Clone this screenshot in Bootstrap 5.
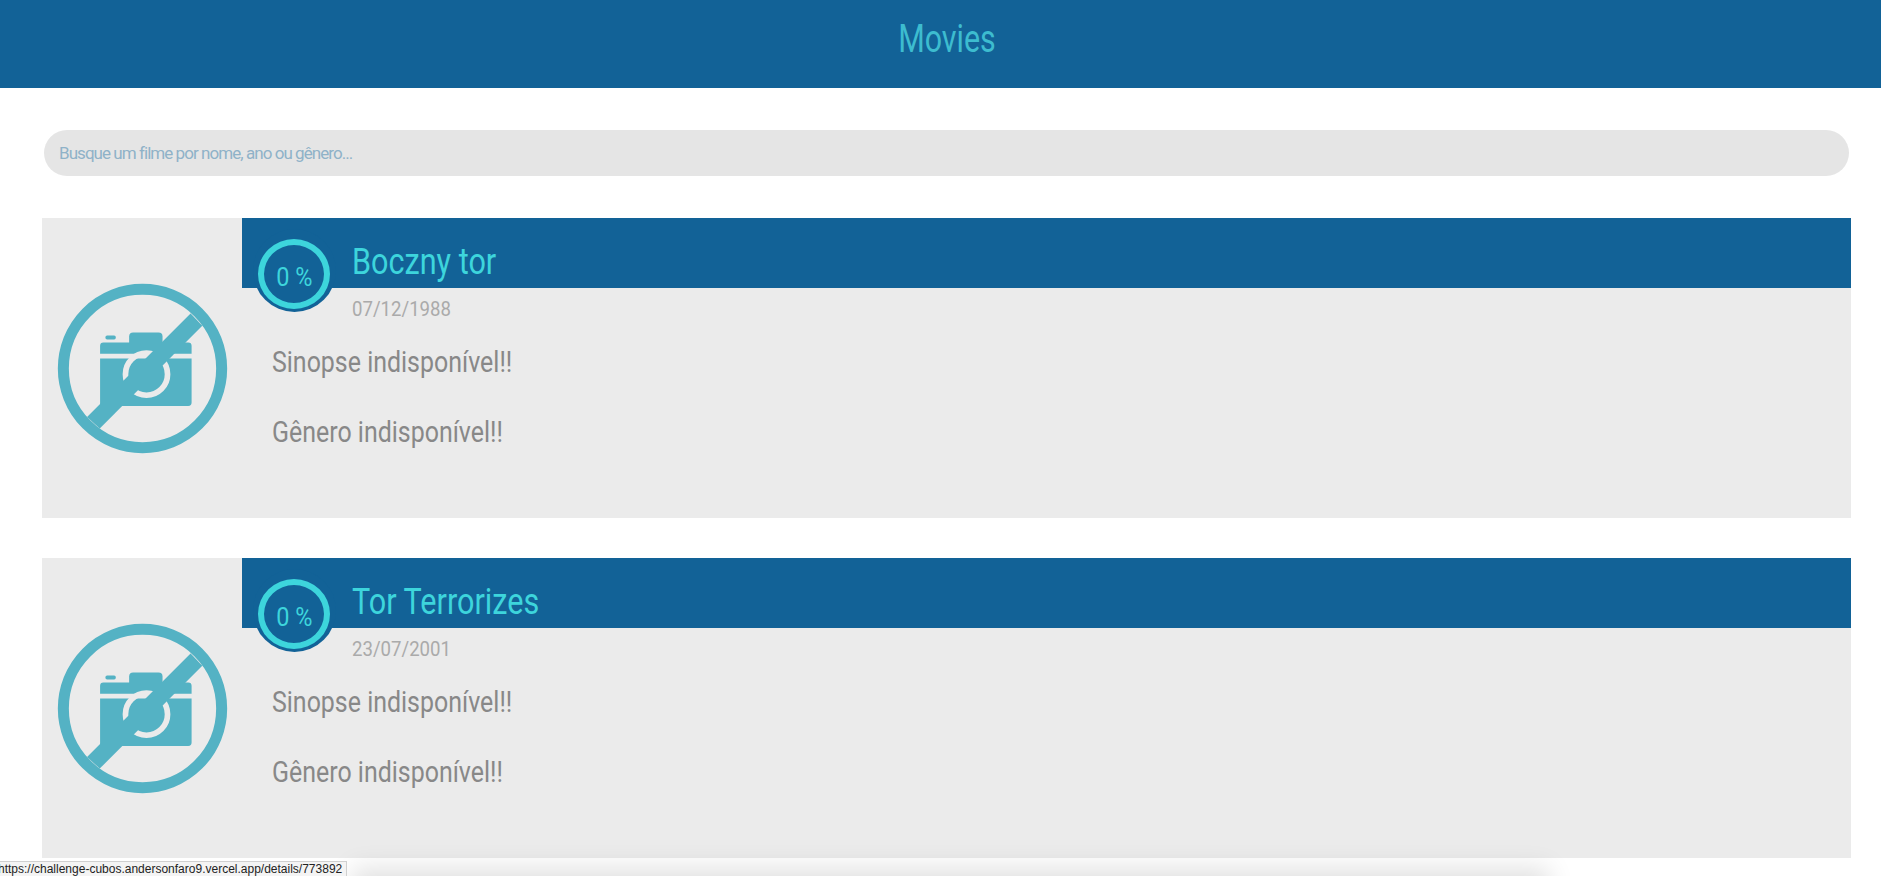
<!DOCTYPE html>
<html lang="pt-BR">
<head>
    <meta charset="UTF-8">
    <meta name="viewport" content="width=device-width, initial-scale=1.0">
    <title>Movies</title>
    <link rel="stylesheet" href="https://cdn.jsdelivr.net/npm/bootstrap@5.3.0/dist/css/bootstrap.min.css">
    <style>
        body {
            font-family: "Roboto", "Liberation Sans", sans-serif;
            background: #fff;
        }

        /* no condensed family installed, so Roboto gets squeezed */
        .narrow-text {
            display: inline-block;
            white-space: nowrap;
            transform: scaleX(0.86);
            transform-origin: left center;
        }

        .top-bar {
            height: 88px;
            padding-left: 12px;
            background: #126297;
            color: #3dbccf;
            font-size: 38px;
            line-height: 78px;
        }

        .top-bar .narrow-text {
            transform: scaleX(0.8);
            transform-origin: center;
        }

        .page-body {
            padding: 42px 30px 18px 42px;
        }

        .search-wrap {
            padding: 0 2px 42px;
        }

        .search-box.form-control {
            height: 46px;
            padding: 0 15px;
            background: #e5e5e5;
            border: 0;
            font-size: 17px;
            letter-spacing: -0.95px;
            box-shadow: none;
        }

        .search-box::placeholder {
            color: #8fb2c8;
        }

        .movie-item {
            height: 300px;
            background: #ebebeb;
            margin-bottom: 40px;
        }

        .movie-item:last-child {
            margin-bottom: 0;
        }

        .poster-col {
            width: 200px;
        }

        .poster-icon {
            width: 171px;
            height: 171px;
        }

        .title-bar {
            height: 70px;
            background: #126297;
            padding-left: 110px;
            color: #3dd5dc;
            font-size: 36px;
            line-height: 88px;
        }

        .title-bar .narrow-text {
            transform: scaleX(0.85);
        }

        .score-ball {
            position: absolute;
            left: 10.5px;
            top: 10.5px;
            width: 83px;
            height: 83px;
            padding: 10.5px 5.5px 0;
            background: #126297;
            border-radius: 50%;
        }

        .score-ring {
            height: 70px;
            border: 6px solid #3dd5dc;
            border-radius: 50%;
            color: #3dd5dc;
            font-size: 25px;
            line-height: 66px;
        }

        .score-ring .narrow-text {
            transform: scaleX(0.94);
            transform-origin: center;
        }

        .movie-date {
            padding-left: 110px;
            margin-top: 9px;
            color: #aaa;
            font-size: 20px;
            line-height: 24px;
        }

        .movie-date .narrow-text {
            transform: scaleX(0.93);
        }

        .movie-info {
            margin: 0 0 34px 30px;
            color: #888;
            font-size: 29px;
            line-height: 36px;
        }

        .movie-date + .movie-info {
            margin-top: 23px;
        }

        .status-link {
            position: fixed;
            left: -3px;
            bottom: 0;
            height: 15px;
            padding: 0 4px 0 0;
            background: #f4f4f4;
            border: 1px solid #d0d0d0;
            border-bottom: 0;
            color: #222;
            font-family: "Liberation Sans", sans-serif;
            font-size: 12px;
            line-height: 15px;
            white-space: nowrap;
            z-index: 3;
        }

        .bottom-shade {
            position: fixed;
            left: 360px;
            right: 340px;
            bottom: -30px;
            height: 30px;
            box-shadow: 0 0 26px 8px rgba(0, 0, 0, 0.12);
            z-index: 2;
        }
    </style>
</head>
<body>

    <header class="top-bar text-center"><span class="narrow-text">Movies</span></header>

    <main class="page-body">
        <div class="search-wrap">
            <input type="text" class="form-control rounded-pill search-box" placeholder="Busque um filme por nome, ano ou gênero...">
        </div>

        <div class="movie-item d-flex">
            <div class="poster-col d-flex align-items-center justify-content-center flex-shrink-0">
                <svg class="poster-icon" viewBox="20 22 512 512">
                    <circle cx="276" cy="278" r="237" fill="none" stroke="#54b2c4" stroke-width="33"/>
                    <rect x="165" y="179" width="31" height="12" rx="5" fill="#54b2c4"/>
                    <path d="M236 205v-23q0-12 12-12h76q12 0 12 12v23z" fill="#54b2c4"/>
                    <path d="M149 234v-24q0-10 10-10h254q10 0 10 10v24zM149 248h274v132q0 10-10 10H149z" fill="#54b2c4"/>
                    <circle cx="288" cy="295" r="63" fill="none" stroke="#ebebeb" stroke-width="17"/>
                    <path d="M420 113l35 37-307 308-38-35z" fill="#54b2c4"/>
                </svg>
            </div>
            <div class="flex-grow-1 position-relative">
                <div class="title-bar"><span class="narrow-text">Boczny tor</span></div>
                <div class="score-ball"><div class="score-ring text-center"><span class="narrow-text">0 %</span></div></div>
                <div class="movie-date"><span class="narrow-text">07/12/1988</span></div>
                <p class="movie-info"><span class="narrow-text">Sinopse indisponível!!</span></p>
                <p class="movie-info"><span class="narrow-text">Gênero indisponível!!</span></p>
            </div>
        </div>

        <div class="movie-item d-flex">
            <div class="poster-col d-flex align-items-center justify-content-center flex-shrink-0">
                <svg class="poster-icon" viewBox="20 22 512 512">
                    <circle cx="276" cy="278" r="237" fill="none" stroke="#54b2c4" stroke-width="33"/>
                    <rect x="165" y="179" width="31" height="12" rx="5" fill="#54b2c4"/>
                    <path d="M236 205v-23q0-12 12-12h76q12 0 12 12v23z" fill="#54b2c4"/>
                    <path d="M149 234v-24q0-10 10-10h254q10 0 10 10v24zM149 248h274v132q0 10-10 10H149z" fill="#54b2c4"/>
                    <circle cx="288" cy="295" r="63" fill="none" stroke="#ebebeb" stroke-width="17"/>
                    <path d="M420 113l35 37-307 308-38-35z" fill="#54b2c4"/>
                </svg>
            </div>
            <div class="flex-grow-1 position-relative">
                <div class="title-bar"><span class="narrow-text">Tor Terrorizes</span></div>
                <div class="score-ball"><div class="score-ring text-center"><span class="narrow-text">0 %</span></div></div>
                <div class="movie-date"><span class="narrow-text">23/07/2001</span></div>
                <p class="movie-info"><span class="narrow-text">Sinopse indisponível!!</span></p>
                <p class="movie-info"><span class="narrow-text">Gênero indisponível!!</span></p>
            </div>
        </div>
    </main>

    <div class="bottom-shade"></div>
    <div class="status-link">https://challenge-cubos.andersonfaro9.vercel.app/details/773892</div>

    <script src="https://cdn.jsdelivr.net/npm/bootstrap@5.3.0/dist/js/bootstrap.bundle.min.js"></script>
</body>
</html>
